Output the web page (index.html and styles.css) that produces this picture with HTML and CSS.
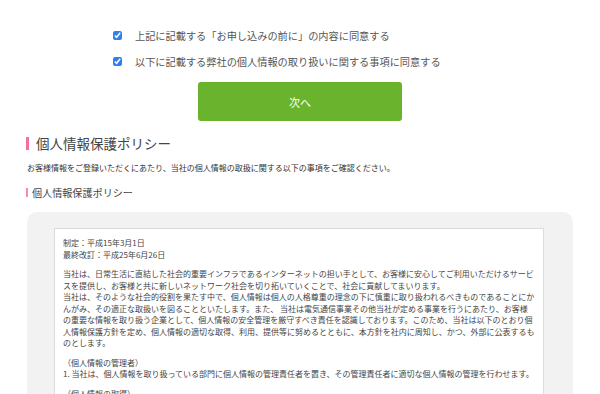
FILE: index.html
```html
<!DOCTYPE html>
<html>
<head>
    <title>個人情報保護ポリシー</title>
    <link rel="stylesheet" href="styles.css">
</head>
<body>
    <div class="wrap">
        <div class="agree">
            <label class="agree-row"><input type="checkbox" checked> 上記に記載する「お申し込みの前に」の内容に同意する</label>
            <label class="agree-row"><input type="checkbox" checked> 以下に記載する弊社の個人情報の取り扱いに関する事項に同意する</label>
        </div>
        <button class="next-btn" type="button">次へ</button>

        <h2 class="title">個人情報保護ポリシー</h2>
        <p class="lead">お客様情報をご登録いただくにあたり、当社の個人情報の取扱に関する以下の事項をご確認ください。</p>
        <h3 class="subtitle">個人情報保護ポリシー</h3>

        <div class="policy-box">
            <div class="policy-text">
                <p>制定：平成15年3月1日<br>最終改訂：平成25年6月26日</p>
                <p>当社は、日常生活に直結した社会的重要インフラであるインターネットの担い手として、お客様に安心してご利用いただけるサービスを提供し、お客様と共に新しいネットワーク社会を切り拓いていくことで、社会に貢献してまいります。<br>当社は、そのような社会的役割を果たす中で、個人情報は個人の人格尊重の理念の下に慎重に取り扱われるべきものであることにかんがみ、その適正な取扱いを図ることといたします。また、 当社は電気通信事業その他当社が定める事業を行うにあたり、お客様の重要な情報を取り扱う企業として、個人情報の安全管理を厳守すべき責任を認識しております。このため、当社は以下のとおり個人情報保護方針を定め、個人情報の適切な取得、利用、提供等に努めるとともに、本方針を社内に周知し、かつ、外部に公表するものとします。</p>
                <p>（個人情報の管理者）<br>1. 当社は、個人情報を取り扱っている部門に個人情報の管理責任者を置き、その管理責任者に適切な個人情報の管理を行わせます。</p>
                <p>（個人情報の取得）<br>2. 当社は、個人情報を取得する際は、利用目的を明示し、適正かつ公正な手段により取得します。</p>
            </div>
        </div>
    </div>
</body>
</html>
```

FILE: styles.css
```css
body {
    font-family: "Noto Sans CJK JP", "Noto Sans", sans-serif;
    background: #fff;
    color: #444;
    margin: 0;
    padding: 0;
}

.wrap {
    width: 546px;
    margin: 0 auto;
}

.agree {
    margin-top: 22px;
    padding-left: 86px;
}

.agree-row {
    display: flex;
    align-items: center;
    height: 26px;
    font-size: 10.2px;
    color: #555;
}

    .agree-row input {
        width: 9px;
        height: 9px;
        margin: 0 13px 0 0;
        accent-color: #2f80ed;
    }

.next-btn {
    display: block;
    width: 204px;
    height: 39px;
    margin: 8px 0 0 171px;
    background-color: #6ab42d;
    color: white;
    border: none;
    border-radius: 3px;
    font-family: inherit;
    font-size: 11px;
}

.title {
    display: flex;
    align-items: center;
    margin: 12px 0 0 -1px;
    height: 20px;
    font-size: 13.5px;
    font-weight: normal;
    color: #444;
}

    .title::before {
        content: "";
        width: 3px;
        height: 13px;
        margin-right: 7px;
        background: #f06fa5;
    }

.lead {
    margin: 9px 0 0;
    font-size: 8px;
    line-height: 12px;
    color: #333;
}

.subtitle {
    display: flex;
    align-items: center;
    margin: 11px 0 0 -1px;
    height: 14px;
    font-size: 10.1px;
    font-weight: normal;
    color: #444;
}

    .subtitle::before {
        content: "";
        width: 2px;
        height: 9px;
        margin-right: 4px;
        background: #f48cb8;
    }

.policy-box {
    margin-top: 13px;
    background: #f2f2f2;
    border-radius: 10px;
    padding: 16px 29px 20px 27px;
}

.policy-text {
    background: #fff;
    border: 1px solid #dcdcdc;
    padding: 8px 7.5px 10px 8px;
    font-size: 8px;
    line-height: 11.5px;
    color: #444;
}

    .policy-text p {
        margin: 0 0 8px;
    }
```
